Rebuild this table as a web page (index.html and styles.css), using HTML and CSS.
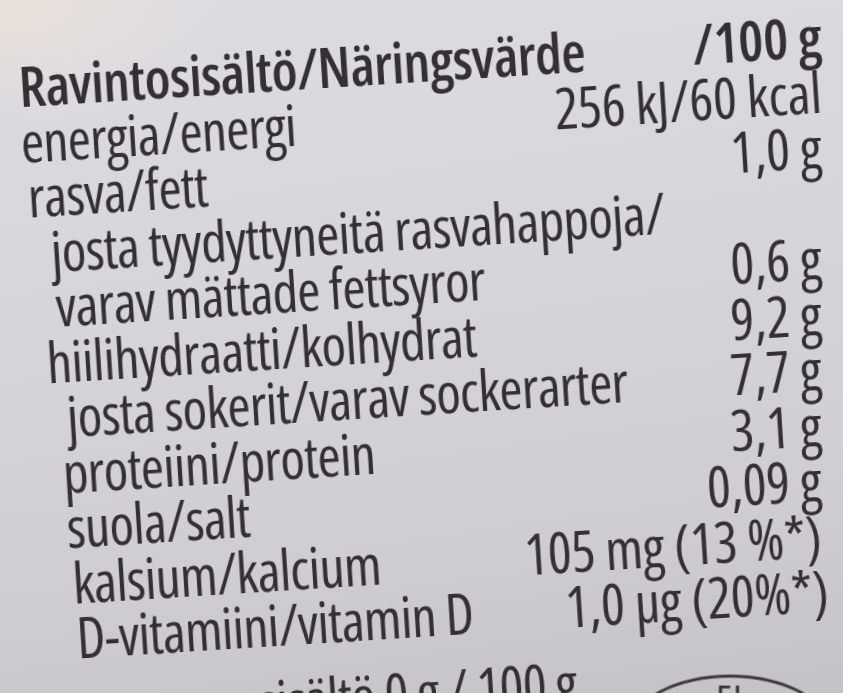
FILE: index.html
```html
<!DOCTYPE html>
<html lang="fi">
<head>
<meta charset="utf-8">
<title>Ravintosisältö</title>
<link rel="stylesheet" href="styles.css">
</head>
<body>
<main class="pack">
  <section class="table">
    <div class="row head pad-18"><span class="name">Ravintosisältö/Näringsvärde</span><span class="val">/100 g</span></div>
    <div class="row pad-20"><span class="name">energia/energi</span><span class="val">256 kJ/60 kcal</span></div>
    <div class="row pad-27"><span class="name">rasva/fett</span><span class="val">1,0 g</span></div>
    <div class="row pad-50"><span class="name">josta tyydyttyneitä rasvahappoja/</span><span class="val"></span></div>
    <div class="row pad-55"><span class="name">varav mättade fettsyror</span><span class="val">0,6 g</span></div>
    <div class="row pad-46"><span class="name">hiilihydraatti/kolhydrat</span><span class="val">9,2 g</span></div>
    <div class="row pad-66"><span class="name">josta sokerit/varav sockerarter</span><span class="val">7,7 g</span></div>
    <div class="row pad-62"><span class="name">proteiini/protein</span><span class="val">3,1 g</span></div>
    <div class="row pad-66"><span class="name">suola/salt</span><span class="val">0,09 g</span></div>
    <div class="row pad-72"><span class="name">kalsium/kalcium</span><span class="val">105 mg (13 %*)</span></div>
    <div class="row pad-76"><span class="name">D-vitamiini/vitamin D</span><span class="val">1,0 µg (20%*)</span></div>
    <div class="row foot"><span class="name">sisältö 0 g / 100 g</span><span class="oval"><span class="oval-text">FI</span></span></div>
  </section>
</main>
</body>
</html>
```
FILE: styles.css
```css
html, body {
  margin: 0;
  padding: 0;
  width: 843px;
  height: 693px;
  overflow: hidden;
}

body {
  background:
    radial-gradient(ellipse 230px 120px at 0px 0px, rgba(234, 224, 216, 0.95), rgba(234, 224, 216, 0) 100%),
    linear-gradient(172deg, #dddce2 0%, #d7d5dc 40%, #cfccd3 75%, #c5c1c8 100%);
  color: #342f34;
  font-family: "Open Sans", "Liberation Sans", sans-serif;
  font-stretch: 75%;
  font-size: 56px;
}

.pack {
  width: 843px;
  height: 693px;
  overflow: hidden;
}

.table {
  padding-top: 33px;
  display: flex;
  flex-direction: column;
}

.row {
  display: flex;
  justify-content: space-between;
  align-items: baseline;
  height: 55.5px;
  line-height: 55.5px;
  padding-right: 21px;
  transform: rotate(-3.6deg);
  transform-origin: 420px 50%;
  white-space: nowrap;
  filter: blur(0.45px);
}

.head {
  font-weight: 600;
}

.head .name {
  letter-spacing: -0.6px;
}

.name {
  letter-spacing: -0.8px;
}

.val {
  letter-spacing: -0.2px;
}

.pad-18 { padding-left: 18px; }
.pad-20 { padding-left: 20px; }
.pad-27 { padding-left: 27px; }
.pad-46 { padding-left: 46px; }
.pad-50 { padding-left: 50px; }
.pad-55 { padding-left: 55px; }
.pad-62 { padding-left: 62px; }
.pad-66 { padding-left: 66px; }
.pad-72 { padding-left: 72px; }
.pad-76 { padding-left: 76px; padding-right: 14px; }

.foot {
  margin-top: 20px;
  padding-left: 258px;
  padding-right: 16px;
  align-items: flex-start;
}

.oval {
  display: flex;
  justify-content: center;
  align-items: flex-start;
  width: 200px;
  height: 110px;
  margin-top: 30px;
  border: 3px solid #3a353a;
  border-radius: 50%;
  transform: rotate(3.6deg);
  font-size: 40px;
  line-height: 30px;
  padding-top: 7px;
  box-sizing: border-box;
}

.oval-text {
  letter-spacing: 2px;
}
```
